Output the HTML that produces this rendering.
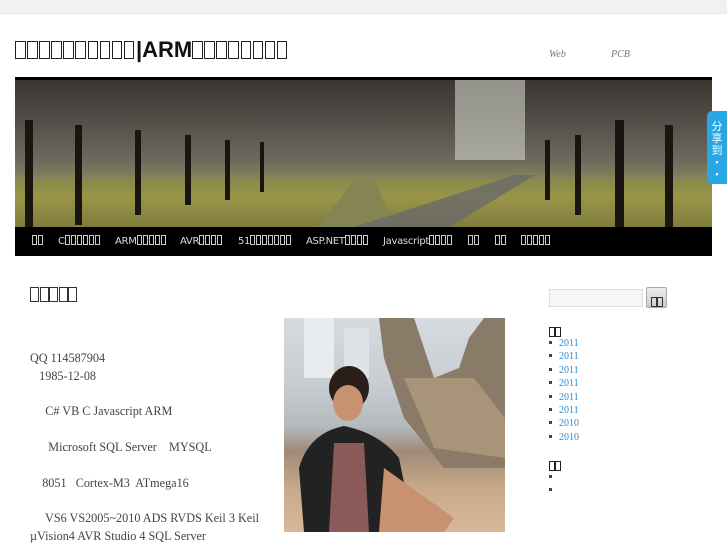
<!DOCTYPE html>
<html><head><meta charset="utf-8"><style>
*{margin:0;padding:0;box-sizing:border-box}
body{width:727px;height:545px;overflow:hidden;background:#fff;font-family:"Liberation Sans",sans-serif;position:relative}
.t{display:inline-block;border:1px solid #222;vertical-align:-2px}
#top{position:absolute;left:0;top:0;width:727px;height:14px;background:#f1f1f1;border-bottom:1px solid #e6e6e6}
#title{position:absolute;left:15px;top:36px;font-size:22px;font-weight:bold;color:#111;white-space:nowrap;line-height:28px}
#title .t{width:10.5px;height:18px;margin-right:1.6px;border-width:1.5px}
.tl{position:absolute;top:49px;font-family:"Liberation Serif",serif;font-style:italic;font-size:10px;color:#777}
#banner{position:absolute;left:15px;top:77px;width:697px;height:150px;border-top:3px solid #000;overflow:hidden;
background:linear-gradient(180deg,#3a3530 0%,#55504a 30%,#6f6a5e 55%,#8c8a5a 70%,#a9a055 80%,#6f6a3a 100%)}
#nav{position:absolute;left:15px;top:227px;width:697px;height:29px;background:#000;color:#ddd;font-size:10px;white-space:nowrap;font-family:"DejaVu Sans",sans-serif;letter-spacing:-0.3px}
#nav span.i{position:absolute;top:8px}
#nav .t{border-color:#ccc;width:5px;height:10px;margin-right:1px;vertical-align:-1px}
#h1{position:absolute;left:30px;top:287px;line-height:16px}
#h1 .t{width:9px;height:15px;margin-right:0.6px;border-color:#333}
.p{position:absolute;left:30px;font-family:"Liberation Serif",serif;font-size:12.2px;color:#444;white-space:pre}
#photo{position:absolute;left:284px;top:318px;width:221px;height:214px;overflow:hidden;
background:linear-gradient(180deg,#d6dbe0 0%,#c8cdd2 30%,#b4bcc0 50%,#a08a78 62%,#c8aa8a 80%,#d8b898 100%)}
#search{position:absolute;left:549px;top:289px;width:94px;height:18px;border:1px solid #ddd;background:#f6f6f6}
#btn{position:absolute;left:646px;top:287px;width:21px;height:21px;border:1px solid #aaa;border-radius:2px;background:linear-gradient(#eee,#ccc)}
.sh{position:absolute;left:549px}
.sh .t{width:6px;height:10px;margin-right:0}
ul{position:absolute;left:549px;list-style:none;font-family:"Liberation Serif",serif;font-size:10px;color:#2a8ad4}
li{height:13.4px;line-height:13.4px}
li:before{content:"";display:inline-block;width:3px;height:3px;background:#444;margin-right:7px;vertical-align:2px}
#share{position:absolute;left:707px;top:111px;width:20px;height:73px;background:#27a8e4;border-radius:5px 0 0 5px;color:#fff;font-size:11px;line-height:12px;text-align:center;padding-top:9px;font-family:"Noto Sans CJK SC",sans-serif}
</style></head><body>
<div id="top"></div>
<div id="title"><span class="t"></span><span class="t"></span><span class="t"></span><span class="t"></span><span class="t"></span><span class="t"></span><span class="t"></span><span class="t"></span><span class="t"></span><span class="t"></span>|ARM<span class="t"></span><span class="t"></span><span class="t"></span><span class="t"></span><span class="t"></span><span class="t"></span><span class="t"></span><span class="t"></span></div>
<div class="tl" style="left:549px">Web</div><div class="tl" style="left:611px">PCB</div>
<div id="banner">
<svg width="697" height="150" style="position:absolute;left:0;top:0">
<polygon points="300,150 380,150 360,100 340,100" fill="#7a7a70"/>
<rect x="0" y="100" width="697" height="50" fill="#8d8c3e" opacity=".55"/>
<polygon points="330,150 430,150 520,95 500,95" fill="#6a6a6a" opacity=".8"/>
<rect x="10" y="40" width="8" height="110" fill="#1a1510"/><rect x="60" y="45" width="7" height="100" fill="#1a1510"/>
<rect x="120" y="50" width="6" height="85" fill="#1a1510"/><rect x="170" y="55" width="6" height="70" fill="#1a1510"/>
<rect x="210" y="60" width="5" height="60" fill="#1a1510"/><rect x="245" y="62" width="4" height="50" fill="#1a1510"/>
<rect x="600" y="40" width="9" height="110" fill="#1a1510"/><rect x="650" y="45" width="8" height="105" fill="#1a1510"/>
<rect x="560" y="55" width="6" height="80" fill="#1a1510"/><rect x="530" y="60" width="5" height="60" fill="#1a1510"/>
<rect x="440" y="0" width="70" height="80" fill="#cfd0c8" opacity=".6"/>
</svg></div>
<div id="nav">
<span class="i" style="left:17px;font-weight:bold"><span class="t"></span><span class="t"></span></span>
<span class="i" style="left:43px">C<span class="t"></span><span class="t"></span><span class="t"></span><span class="t"></span><span class="t"></span><span class="t"></span></span>
<span class="i" style="left:100px">ARM<span class="t"></span><span class="t"></span><span class="t"></span><span class="t"></span><span class="t"></span></span>
<span class="i" style="left:165px">AVR<span class="t"></span><span class="t"></span><span class="t"></span><span class="t"></span></span>
<span class="i" style="left:223px">51<span class="t"></span><span class="t"></span><span class="t"></span><span class="t"></span><span class="t"></span><span class="t"></span><span class="t"></span></span>
<span class="i" style="left:291px">ASP.NET<span class="t"></span><span class="t"></span><span class="t"></span><span class="t"></span></span>
<span class="i" style="left:368px">Javascript<span class="t"></span><span class="t"></span><span class="t"></span><span class="t"></span></span>
<span class="i" style="left:453px"><span class="t"></span><span class="t"></span></span>
<span class="i" style="left:480px"><span class="t"></span><span class="t"></span></span>
<span class="i" style="left:506px;font-weight:bold"><span class="t"></span><span class="t"></span><span class="t"></span><span class="t"></span><span class="t"></span></span>
</div>
<div id="h1"><span class="t"></span><span class="t"></span><span class="t"></span><span class="t"></span><span class="t"></span></div>
<div class="p" style="top:351px">QQ 114587904</div>
<div class="p" style="top:369px">   1985-12-08</div>
<div class="p" style="top:404px">     C# VB C Javascript ARM</div>
<div class="p" style="top:440px">      Microsoft SQL Server    MYSQL</div>
<div class="p" style="top:476px">    8051   Cortex-M3  ATmega16</div>
<div class="p" style="top:511px">     VS6 VS2005~2010 ADS RVDS Keil 3 Keil</div>
<div class="p" style="top:529px">µVision4 AVR Studio 4 SQL Server</div>
<div id="photo"><svg width="221" height="214">
<rect x="20" y="0" width="30" height="60" fill="#e8ecef"/><rect x="60" y="10" width="25" height="50" fill="#dfe3e6"/>
<path d="M95 0 L130 0 L150 60 L175 50 L185 20 L200 0 L221 0 L221 150 L160 150 L120 100 L100 40Z" fill="#8a7a68"/>
<path d="M120 60 L190 60 L221 100 L221 140 L150 130Z" fill="#a89478"/>
<ellipse cx="65" cy="50" rx="20" ry="22" fill="#2a1e18" transform="translate(0,20)"/>
<ellipse cx="64" cy="85" rx="15" ry="18" fill="#c89270"/>
<path d="M20 214 L15 150 Q25 115 60 108 Q95 115 115 140 L130 214Z" fill="#222"/>
<path d="M50 125 L80 125 L85 214 L45 214Z" fill="#8a5a58"/>
<path d="M100 150 L170 200 L160 214 L95 214Z" fill="#c89270"/>
</svg></div>
<div id="search"></div><div id="btn"><span style="position:absolute;left:4px;top:4px"><span class="t" style="width:6px;height:10px;margin:0;border-color:#333"></span><span class="t" style="width:6px;height:10px;border-color:#333"></span></span></div>
<div class="sh" style="top:322px"><span class="t"></span><span class="t"></span></div>
<ul style="top:337px"><li>2011</li><li>2011</li><li>2011</li><li>2011</li><li>2011</li><li>2011</li><li>2010</li><li>2010</li></ul>
<div class="sh" style="top:456px"><span class="t"></span><span class="t"></span></div>
<ul style="top:471px"><li></li><li></li></ul>
<div id="share">分<br>享<br>到<br>·<br>·</div>
</body></html>
